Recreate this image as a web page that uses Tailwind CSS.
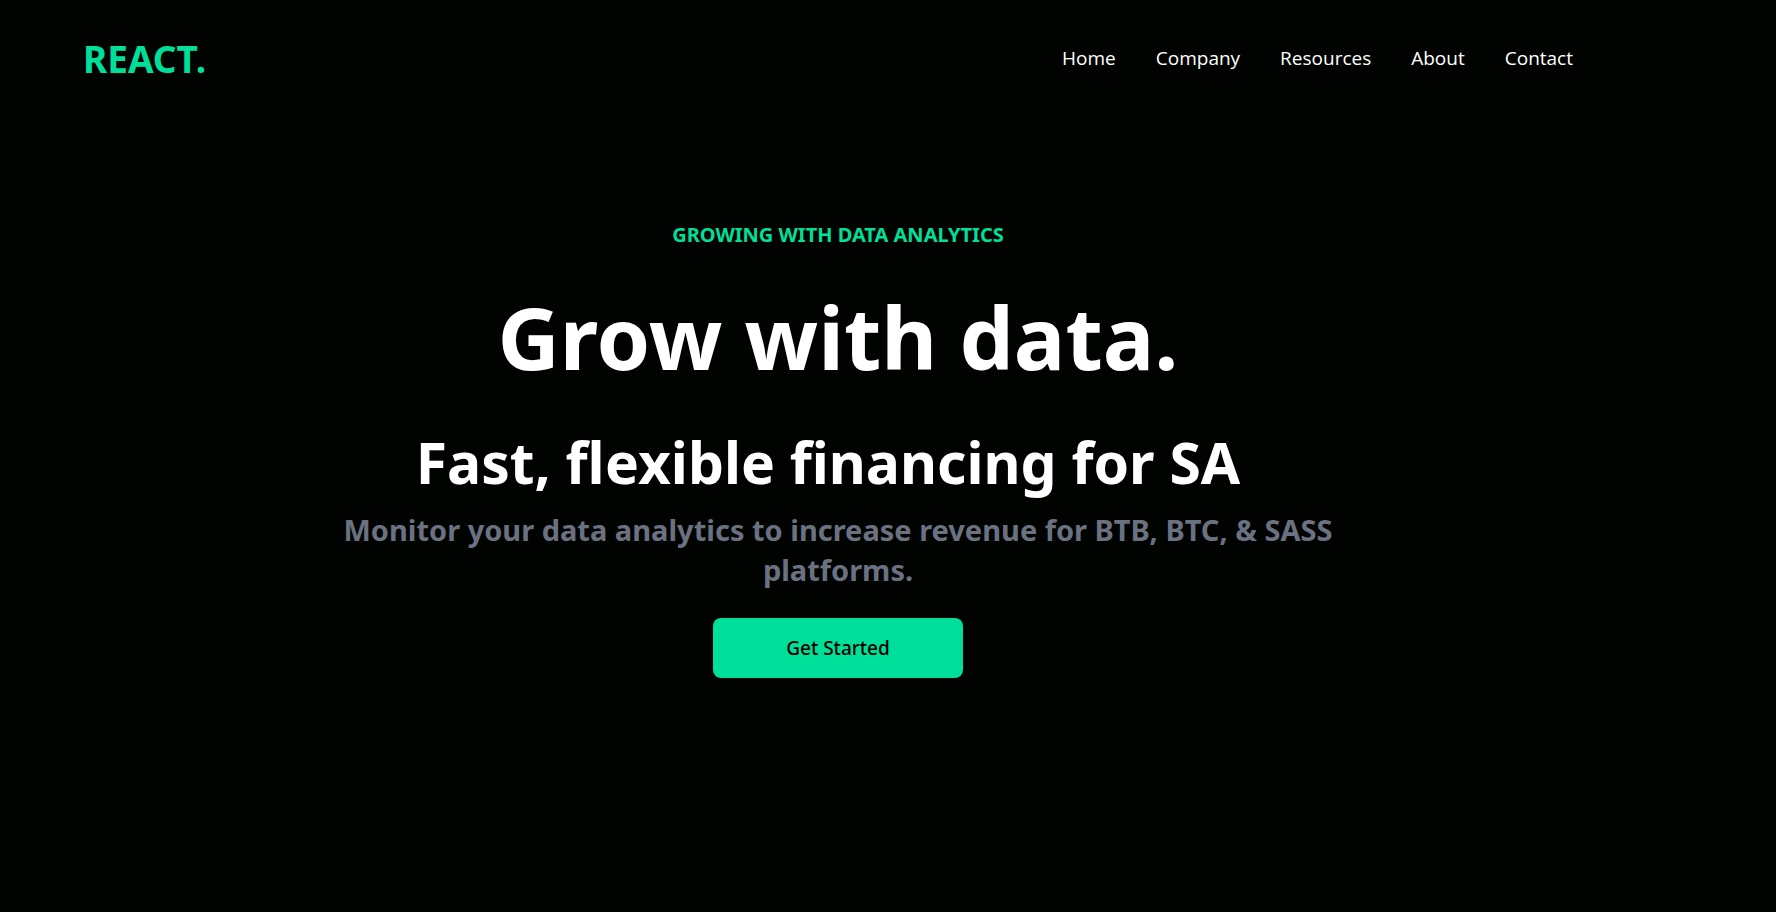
<!DOCTYPE html>
<html lang="en">
<head>
<meta charset="utf-8">
<meta name="viewport" content="width=device-width, initial-scale=1">
<title>React. Grow with data</title>
<script src="https://cdn.jsdelivr.net/npm/@tailwindcss/browser@4"></script>
</head>
<body class="min-h-screen bg-[#000300] pr-[100px] font-['Segoe_UI','Noto_Sans',sans-serif] text-white">
<header class="mx-auto flex h-[117px] max-w-[1550px] items-center justify-between px-5">
  <a href="#" class="text-[37px] font-bold text-[#00df9a]">REACT.</a>
  <nav class="font-['Segoe_UI','Open_Sans',sans-serif]">
    <ul class="flex gap-10 px-5 text-[19px]">
      <li><a href="#">Home</a></li>
      <li><a href="#">Company</a></li>
      <li><a href="#">Resources</a></li>
      <li><a href="#">About</a></li>
      <li><a href="#">Contact</a></li>
    </ul>
  </nav>
</header>
<main class="mx-auto flex max-w-[1000px] flex-col items-center pt-[103px] text-center font-bold">
  <p class="text-[20px] leading-[30px] text-[#00df9a]">GROWING WITH DATA ANALYTICS</p>
  <h1 class="pt-[42px] text-[86px] leading-[90px]">Grow with data.</h1>
  <h2 class="pt-10 pr-5 text-[57px] leading-[80px]">Fast, flexible financing for SA</h2>
  <p class="pt-2 text-[29px] leading-10 text-gray-500">Monitor your data analytics to increase revenue for BTB, BTC, &amp; SASS platforms.</p>
  <button type="button" class="mt-7 h-15 w-[250px] rounded-lg bg-[#00df9a] text-[19px] font-medium text-black">Get Started</button>
</main>
</body>
</html>
